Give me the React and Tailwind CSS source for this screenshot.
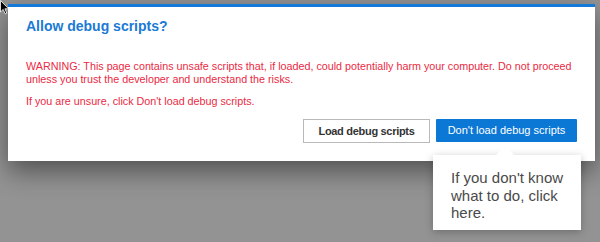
import React from "react"

function Cursor() {
  return (
    <svg width="10" height="15" viewBox="0 0 10 15" className="absolute left-0 top-0">
      <path d="M0.5 0.5 L0.5 12 L3.2 9.4 L5.2 13.8 L6.8 13.1 L4.9 8.8 L8.6 8.8 Z" fill="#000" stroke="#fff" strokeWidth="0.8" />
    </svg>
  )
}

export default function App() {
  return (
    <div className="relative h-[242px] w-[600px] overflow-hidden bg-[#939393] pt-[4px] pl-[8px] font-['Liberation_Sans',Arial,sans-serif]">
      {/* Dialog */}
      <div className="w-[587px] border-t-[3px] border-[#1479d9] bg-white px-[18px] pt-[10px] pb-[18px] shadow-[0_10px_24px_rgba(0,0,0,0.45)]">
        <h1 className="text-[14px] leading-[18px] font-bold text-[#1a7ad4]">Allow debug scripts?</h1>
        <div className="mt-[25px] text-[10.75px] leading-[13px] text-[#ea2a44]">
          <p>
            WARNING: This page contains unsafe scripts that, if loaded, could potentially harm your computer. Do not proceed
            unless you trust the developer and understand the risks.
          </p>
          <p className="mt-[9px]">If you are unsure, click Don't load debug scripts.</p>
        </div>
        <div className="mt-[11px] flex justify-end gap-[6px]">
          <button className="h-[24px] w-[127px] border border-[#b9b9b9] bg-white text-[11px] font-bold tracking-[-0.3px] text-[#333]">
            Load debug scripts
          </button>
          <button className="h-[23px] w-[141px] rounded-[1px] bg-[#0b78d6] text-[11px] text-white">
            Don't load debug scripts
          </button>
        </div>
      </div>

      {/* Tooltip */}
      <div className="absolute left-[433px] top-[155px] w-[148px] bg-white pt-[14px] pl-[18px] pr-[10px] pb-[8px] text-[15px] leading-[17.5px] text-[#4a4a4a] shadow-[0_2px_8px_rgba(0,0,0,0.25)]">
        <svg width="20" height="10" viewBox="0 0 20 10" className="absolute left-[62px] top-[-9px]">
          <path d="M0 10 L10 0 L20 10 Z" fill="#fff" />
        </svg>
        <p>If you don't know what to do, click here.</p>
      </div>

      <Cursor />
    </div>
  )
}
